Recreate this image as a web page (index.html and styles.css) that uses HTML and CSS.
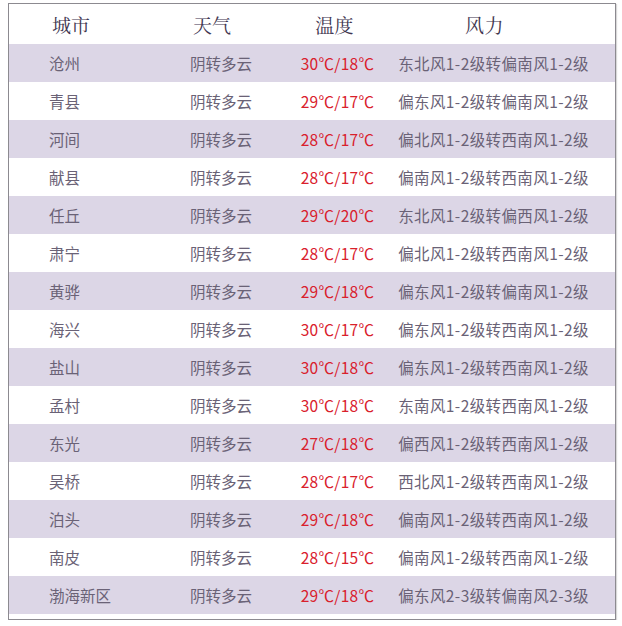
FILE: index.html
```html
<!DOCTYPE html>
<html lang="zh">
<head>
<meta charset="utf-8">
<title>天气预报</title>
<link rel="stylesheet" href="styles.css">
</head>
<body>
<div class="frame">
  <div class="row head">
    <div class="c city">城市</div>
    <div class="c wx">天气</div>
    <div class="c temp">温度</div>
    <div class="c wind">风力</div>
  </div>
  <div class="row band"><div class="c city">沧州</div><div class="c wx">阴转多云</div><div class="c temp">30℃/18℃</div><div class="c wind">东北风1-2级转偏南风1-2级</div></div>
  <div class="row"><div class="c city">青县</div><div class="c wx">阴转多云</div><div class="c temp">29℃/17℃</div><div class="c wind">偏东风1-2级转偏南风1-2级</div></div>
  <div class="row band"><div class="c city">河间</div><div class="c wx">阴转多云</div><div class="c temp">28℃/17℃</div><div class="c wind">偏北风1-2级转西南风1-2级</div></div>
  <div class="row"><div class="c city">献县</div><div class="c wx">阴转多云</div><div class="c temp">28℃/17℃</div><div class="c wind">偏南风1-2级转西南风1-2级</div></div>
  <div class="row band"><div class="c city">任丘</div><div class="c wx">阴转多云</div><div class="c temp">29℃/20℃</div><div class="c wind">东北风1-2级转偏西风1-2级</div></div>
  <div class="row"><div class="c city">肃宁</div><div class="c wx">阴转多云</div><div class="c temp">28℃/17℃</div><div class="c wind">偏北风1-2级转西南风1-2级</div></div>
  <div class="row band"><div class="c city">黄骅</div><div class="c wx">阴转多云</div><div class="c temp">29℃/18℃</div><div class="c wind">偏东风1-2级转偏南风1-2级</div></div>
  <div class="row"><div class="c city">海兴</div><div class="c wx">阴转多云</div><div class="c temp">30℃/17℃</div><div class="c wind">偏东风1-2级转西南风1-2级</div></div>
  <div class="row band"><div class="c city">盐山</div><div class="c wx">阴转多云</div><div class="c temp">30℃/18℃</div><div class="c wind">偏东风1-2级转西南风1-2级</div></div>
  <div class="row"><div class="c city">孟村</div><div class="c wx">阴转多云</div><div class="c temp">30℃/18℃</div><div class="c wind">东南风1-2级转西南风1-2级</div></div>
  <div class="row band"><div class="c city">东光</div><div class="c wx">阴转多云</div><div class="c temp">27℃/18℃</div><div class="c wind">偏西风1-2级转西南风1-2级</div></div>
  <div class="row"><div class="c city">吴桥</div><div class="c wx">阴转多云</div><div class="c temp">28℃/17℃</div><div class="c wind">西北风1-2级转西南风1-2级</div></div>
  <div class="row band"><div class="c city">泊头</div><div class="c wx">阴转多云</div><div class="c temp">29℃/18℃</div><div class="c wind">偏南风1-2级转西南风1-2级</div></div>
  <div class="row"><div class="c city">南皮</div><div class="c wx">阴转多云</div><div class="c temp">28℃/15℃</div><div class="c wind">偏南风1-2级转西南风1-2级</div></div>
  <div class="row band last"><div class="c city">渤海新区</div><div class="c wx">阴转多云</div><div class="c temp">29℃/18℃</div><div class="c wind">偏东风2-3级转偏南风2-3级</div></div>
</div>
</body>
</html>
```

FILE: styles.css
```css
html, body {
  margin: 0;
  padding: 0;
  background: #ffffff;
}

body {
  padding: 3px 0 0 8px;
  font-family: "Noto Sans CJK SC", "Noto Sans", sans-serif;
}

.frame {
  width: 606px;
  border: 1px solid #8c8a90;
  padding-bottom: 5px;
  background: #ffffff;
  box-shadow: 1px 1px 1px rgba(0, 0, 0, 0.15);
}

.row {
  display: grid;
  grid-template-columns: 151px 125px 105px 225px;
  height: 38px;
  align-items: center;
  font-size: 15.5px;
  color: #6a6276;
}

.band {
  background: #dcd6e6;
}

.head {
  height: 40px;
  font-family: "Noto Serif CJK SC", "Noto Sans CJK SC", serif;
  font-size: 19px;
  color: #3f3650;
}

.c {
  white-space: nowrap;
}

.city {
  padding-left: 40px;
}

.wx {
  padding-left: 30px;
}

.temp {
  text-align: center;
  color: #d9202c;
  letter-spacing: 0.3px;
}

.wind {
  text-align: center;
  padding-right: 18px;
  letter-spacing: 0.4px;
}

.head .city {
  padding-left: 43px;
}

.head .wx {
  padding-left: 33px;
}

.head .temp {
  color: #3f3650;
  padding-right: 6px;
}

.head .wind {
  padding-right: 36px;
}
```
